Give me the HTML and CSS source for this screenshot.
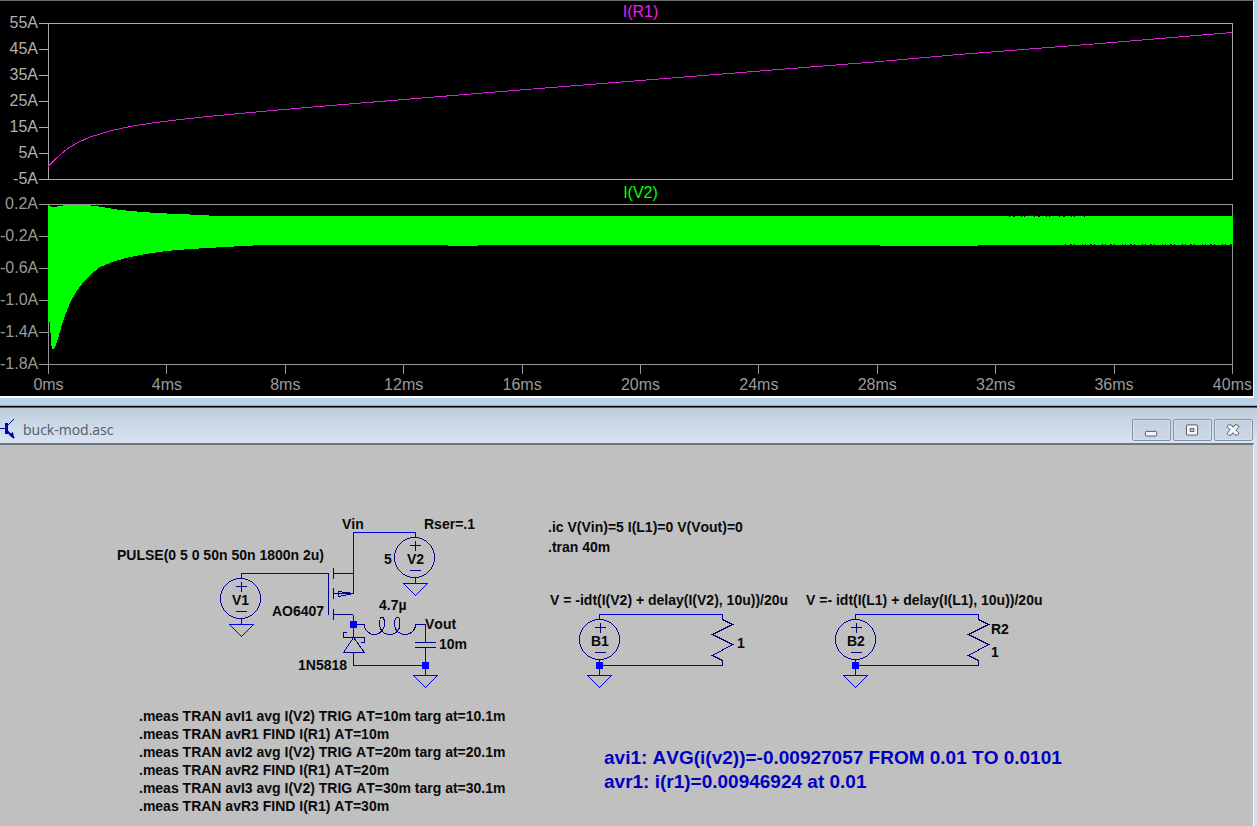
FILE: index.html
```html
<!DOCTYPE html>
<html lang="en">
<head>
<meta charset="utf-8">
<title>buck-mod.asc</title>
<link rel="stylesheet" href="styles.css">
</head>
<body>
<section class="plot-window" aria-label="Waveforms">
  <div class="plots">
    <h2 class="trace trace-r1">I(R1)</h2>
    <ul class="y-axis y-axis-r1">
      <li>55A</li><li>45A</li><li>35A</li><li>25A</li><li>15A</li><li>5A</li><li>-5A</li>
    </ul>
    <div class="pane pane-r1">
      <svg class="wave" viewBox="0 0 1184 156" preserveAspectRatio="none">
        <path class="line-r1" d="M0 143.500L8 135.500L16 128.500L22 124L30 119.500L42 114L62 108L82 103.500L102 100.300L132 96.500L162 93.300L202 89.500L251 85.200L352 76.800L472 67L592 57.500L712 48L832 38.500L911 31.500L1052 20.500L1184 9.500"/>
      </svg>
    </div>
    <h2 class="trace trace-v2">I(V2)</h2>
    <ul class="y-axis y-axis-v2">
      <li>0.2A</li><li>-0.2A</li><li>-0.6A</li><li>-1.0A</li><li>-1.4A</li><li>-1.8A</li>
    </ul>
    <div class="pane pane-v2">
      <svg class="wave" viewBox="0 0 1184 160" preserveAspectRatio="none">
        <path class="fill-v2" d="M0 0L1 2L5 3L12 2L18 1L37 1L48 2L72 6L94 8L127 10L157 11L165 12H1185V41H930V42H832V41H430V42H400V41H214L177 43L142 45L118 47L97 50L82 53L67 57L52 63L47 67L37 76L28 88L22 99L16 114L11 131L8 141L6 145H4L3 139L2 118H0Z"/>
        <path class="noise" stroke-dasharray="1 3 2 6 1 2 1 9" d="M961 12.500H1038"/>
        <path class="noise" stroke-dasharray="1 4 2 2 1 7 1 2" d="M1017 40.500H1184"/>
      </svg>
    </div>
    <ul class="x-axis">
      <li>0ms</li><li>4ms</li><li>8ms</li><li>12ms</li><li>16ms</li><li>20ms</li><li>24ms</li><li>28ms</li><li>32ms</li><li>36ms</li><li>40ms</li>
    </ul>
  </div>
</section>

<section class="schematic-window">
  <header class="title-bar">
    <svg class="app-icon" width="16" height="22" viewBox="0 0 16 22">
      <path class="thin" d="M0 10.500H6M8 7L10 5L11 4L14 1"/>
      <path class="thick" d="M6.500 5V16"/>
      <path class="medium" d="M7 13L10 16L14 20"/>
      <path class="head" d="M9 17L13 14L14 20Z"/>
    </svg>
    <h1 class="file-name">buck-mod.asc</h1>
    <button class="win-button" type="button" aria-label="Minimize">
      <svg width="14" height="16" viewBox="0 0 14 16"><rect class="glyph" x="0.500" y="9.500" width="12" height="5" rx="1"/></svg>
    </button>
    <button class="win-button" type="button" aria-label="Restore">
      <svg width="14" height="16" viewBox="0 0 14 16"><rect class="glyph" x="0.500" y="2.500" width="12" height="11" rx="1"/><rect class="hole" x="4.500" y="6.500" width="4" height="3"/></svg>
    </button>
    <button class="win-button" type="button" aria-label="Close">
      <svg width="14" height="16" viewBox="0 0 14 16"><path class="glyph" d="M0.500 3.500L1.500 2.500H4.500L6.500 5L8.500 2.500H11.500L12.500 3.500V5L9.500 8L12.500 11V12.500L11.500 13.500H8.500L6.500 11L4.500 13.500H1.500L0.500 12.500V11L3.500 8L0.500 5Z"/></svg>
    </button>
  </header>
  <div class="canvas">
    <svg class="schematic">
      <defs>
        <g id="source">
          <circle cx="0" cy="20" r="20"/>
          <path d="M-5 8H6M0.500 3V13M-5 33H6"/>
        </g>
        <path id="ground" d="M-12 0H12L0 12Z"/>
        <path id="resistor" d="M0 0V5L10 10L-10 20L10 30L-10 41L0 46V51"/>
        <rect id="node" x="-4" y="-4" width="7" height="7"/>
      </defs>
      <g transform="translate(0 -445)">
        <g class="wire">
          <path d="M241.500 578V573.500H328.500M353.500 593V532.500H415.500V538M353.500 614.500V638M353.500 652V665.500H425.500M425.500 624.500V642M425.500 648V675M241.500 618V624M415.500 577V583"/>
          <path d="M599.500 619V614.500H722.500M599.500 665.500H722.500M599.500 660V675M855.500 619V614.500H978.500M855.500 665.500H978.500M855.500 660V675"/>
          <use href="#ground" x="241.500" y="624.500"/>
          <use href="#ground" x="415.500" y="583.500"/>
          <use href="#ground" x="425.500" y="675.500"/>
          <use href="#ground" x="599.500" y="675.500"/>
          <use href="#ground" x="855.500" y="675.500"/>
        </g>
        <g class="part">
          <use href="#source" x="240.500" y="578.500"/>
          <use href="#source" x="414.500" y="537.500"/>
          <use href="#source" x="599.500" y="619.500"/>
          <use href="#source" x="855.500" y="619.500"/>
          <path d="M328.500 573V615M333.500 568V579M333.500 588V599M333.500 609V620M333 573.500H353M333 593.500H353M333 614.500H353M353.500 593.500L338.500 591.500V596.500Z"/>
          <path d="M347 632.500H343.500V637.500H364.500V642.500H361M353.500 637.500L343.500 652.500H364.500Z"/>
          <path d="M415 642.500H436M415 647.500H436"/>
          <path d="M357 624.500H364.500C364.500 631 370 634.500 374 634.500C380 634.500 384.500 630 384.500 623C384.500 615 379.500 615 379.500 624C380 631 384 634.500 390 634.500C396 634.500 400 630 400 623C400 615 394.500 615 394.500 624C394.500 631 400 634.500 405 634.500C411 634.500 415.500 630 415.500 624.500H426"/>
          <use href="#resistor" x="722.500" y="614.500"/>
          <use href="#resistor" x="978.500" y="614.500"/>
        </g>
        <g class="node">
          <use href="#node" x="354" y="625"/>
          <use href="#node" x="426" y="666"/>
          <use href="#node" x="600" y="666"/>
          <use href="#node" x="856" y="666"/>
        </g>
        <g class="label">
          <text x="342" y="529">Vin</text>
          <text x="424" y="529">Rser=.1</text>
          <text x="117" y="560">PULSE(0 5 0 50n 50n 1800n 2u)</text>
          <text x="384" y="564">5</text>
          <text x="407" y="564">V2</text>
          <text x="232" y="605">V1</text>
          <text x="272" y="616">AO6407</text>
          <text x="379" y="610">4.7µ</text>
          <text x="425" y="629">Vout</text>
          <text x="439" y="649">10m</text>
          <text x="298" y="670">1N5818</text>
          <text x="548" y="532">.ic V(Vin)=5 I(L1)=0 V(Vout)=0</text>
          <text x="548" y="552">.tran 40m</text>
          <text x="550" y="605">V = -idt(I(V2) + delay(I(V2), 10u))/20u</text>
          <text x="806" y="605">V =- idt(I(L1) + delay(I(L1), 10u))/20u</text>
          <text x="591" y="646">B1</text>
          <text x="847" y="646">B2</text>
          <text x="737" y="648">1</text>
          <text x="991" y="634">R2</text>
          <text x="991" y="657">1</text>
          <text x="139" y="721">.meas TRAN avI1 avg I(V2) TRIG AT=10m targ at=10.1m</text>
          <text x="139" y="739">.meas TRAN avR1 FIND I(R1) AT=10m</text>
          <text x="139" y="757">.meas TRAN avI2 avg I(V2) TRIG AT=20m targ at=20.1m</text>
          <text x="139" y="775">.meas TRAN avR2 FIND I(R1) AT=20m</text>
          <text x="139" y="793">.meas TRAN avI3 avg I(V2) TRIG AT=30m targ at=30.1m</text>
          <text x="139" y="811">.meas TRAN avR3 FIND I(R1) AT=30m</text>
        </g>
        <g class="result">
          <text x="604" y="764">avi1: AVG(i(v2))=-0.00927057 FROM 0.01 TO 0.0101</text>
          <text x="604" y="788">avr1: i(r1)=0.00946924 at 0.01</text>
        </g>
      </g>
    </svg>
  </div>
</section>
</body>
</html>
```
FILE: styles.css
```css
* { box-sizing: border-box; }

body {
  margin: 0;
  min-height: 100vh;
  display: flex;
  flex-direction: column;
  overflow: hidden;
  background: #b9d1ea;
  font-family: "Liberation Sans", Arial, sans-serif;
  font-kerning: none;
}

h1, h2, ul { margin: 0; padding: 0; font-weight: normal; }
ul { list-style: none; }

/* Waveform window */
.plot-window {
  padding: 0 3px 7px 0;
  background: #b9d1ea;
  border-bottom: 1px solid #48c8f4;
}

.plots {
  display: grid;
  grid-template-columns: 48px 1fr;
  grid-template-rows: 22px 157px 24px 161px 31px;
  padding-right: 20px;
  background: #000;
  border-top: 1px solid #6c6c6c;
  border-right: 1px solid #fff;
  border-bottom: 2px solid #fff;
  font-size: 16px;
}

.trace { grid-column: 2; text-align: center; font-size: 16px; line-height: 22px; }
.trace-r1 { color: #f01ef0; }
.trace-v2 { color: #0f0; line-height: 26px; }

.y-axis { color: #b0b0b0; }
.y-axis li {
  display: flex;
  align-items: center;
  justify-content: flex-end;
  gap: 1px;
}
.y-axis li::after { content: ""; width: 9px; height: 1px; background: currentColor; }
.y-axis-r1 { margin: -13px 0; }
.y-axis-r1 li { height: 26px; }
.y-axis-v2 { margin: -16px 0; color: #9a9a9a; }
.y-axis-v2 li { height: 32px; }

.pane { border: 1px solid #a8a8a8; }
.pane-v2 { border-color: #969696; }
.wave {
  display: block;
  width: calc(100% + 1px);
  height: calc(100% + 1px);
  margin: -1px 0 0 -1px;
  overflow: visible;
  shape-rendering: crispEdges;
}
.line-r1 { fill: none; stroke: #d820d8; stroke-width: 1; vector-effect: non-scaling-stroke; }
.fill-v2 { fill: #0f0; }
.noise { stroke: #000; stroke-width: 1; }

.x-axis {
  grid-column: 2;
  display: flex;
  justify-content: space-between;
  color: #9a9a9a;
}
.x-axis li {
  display: flex;
  flex-direction: column;
  align-items: center;
  width: 1px;
  line-height: 22px;
}
.x-axis li::before { content: ""; flex: none; width: 1px; height: 9px; background: currentColor; }

/* Schematic window */
.schematic-window {
  flex: 1;
  display: flex;
  flex-direction: column;
  border-top: 1px solid #000;
  background: #d3dfec;
}

.title-bar {
  display: flex;
  align-items: center;
  gap: 2px;
  height: 36px;
  padding-right: 4px;
  border-top: 1px solid #596068;
  background: linear-gradient(#bfcddb, #d8e4f1);
}
.file-name {
  flex: 1;
  padding: 8px 0 0 5px;
  font: 14px/20px "Open Sans", "Noto Sans", sans-serif;
  color: #535c66;
}
.app-icon { margin-top: 6px; }
.app-icon path { stroke: #0000b0; fill: none; }
.app-icon .thick { stroke-width: 3; }
.app-icon .medium { stroke-width: 2; }
.app-icon .head { fill: #0000b0; stroke: none; }

.win-button {
  display: flex;
  align-items: center;
  justify-content: center;
  width: 39px;
  height: 22px;
  margin-top: 8px;
  padding: 0;
  border: 1px solid #8593a8;
  border-radius: 2px;
  background: linear-gradient(#c3d0df, #cad8e7);
  box-shadow: inset 0 0 0 1px #d6e1ed;
}
.win-button svg { flex: none; width: 13px; height: 16px; overflow: visible; }
.glyph { fill: #f5f5f7; stroke: #50545e; }
.hole { fill: #c3d0df; stroke: #50545e; }

.canvas {
  flex: 1;
  margin-right: 3px;
  border-top: 2px solid #6e747a;
  border-right: 1px solid #f2f5f8;
  background: #c0c0c0;
}
.schematic { display: block; width: 100%; height: 380px; }
.wire { fill: none; stroke: #0000e6; shape-rendering: crispEdges; }
.part { fill: none; stroke: #00008c; shape-rendering: crispEdges; }
.node { fill: #00f; }
.label { fill: #0a0a0a; font-size: 14px; font-weight: bold; }
.result { fill: #0000c0; font-size: 19px; font-weight: bold; }
```
